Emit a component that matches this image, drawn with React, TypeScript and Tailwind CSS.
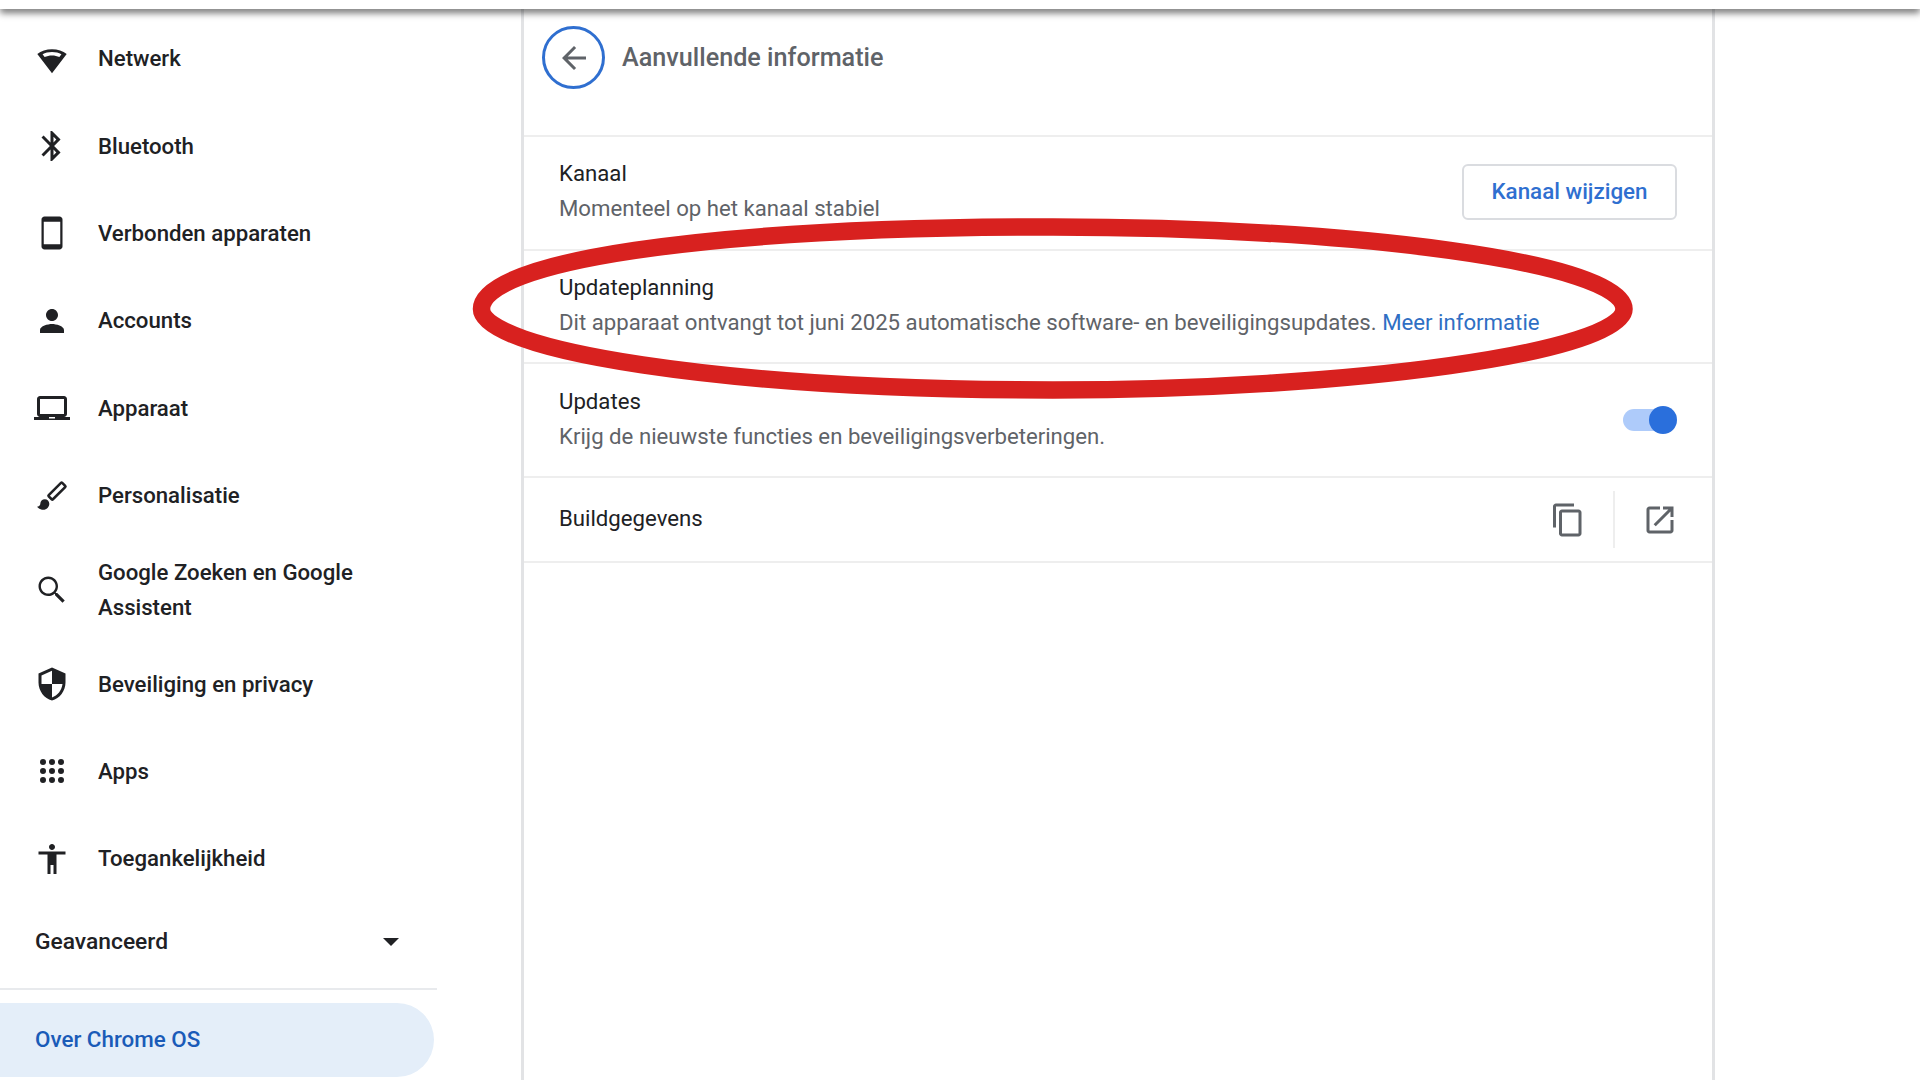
const icons: Record<string, string> = {
  bluetooth:
    "M17.71 7.71L12 2h-1v7.59L6.41 5 5 6.41 10.59 12 5 17.59 6.41 19 11 14.41V22h1l5.71-5.71-4.3-4.29 4.3-4.29zM13 5.83l1.88 1.88L13 9.59V5.83zm1.88 10.46L13 18.17v-3.76l1.88 1.88z",
  phone:
    "M17 1H7c-1.1 0-2 .9-2 2v18c0 1.1.9 2 2 2h10c1.1 0 2-.9 2-2V3c0-1.1-.9-2-2-2zM17.5 19.5h-11v-15h11v15z",
  person:
    "M12 12c2.21 0 4-1.79 4-4s-1.79-4-4-4-4 1.79-4 4 1.79 4 4 4zm0 2c-2.67 0-8 1.34-8 4v2h16v-2c0-2.66-5.33-4-8-4z",
  laptop:
    "M20 18c1.1 0 1.99-.9 1.99-2L22 6c0-1.1-.9-2-2-2H4c-1.1 0-2 .9-2 2v10c0 1.1.9 2 2 2H0v2h24v-2h-4zM4 6h16v10H4V6zM10 18h4v1h-4z",
  brush:
    "M21.4 4.6l-2-2a1.4 1.4 0 0 0-2 0L9.2 10.8a1.4 1.4 0 0 0 0 2l2 2a1.4 1.4 0 0 0 2 0l8.2-8.2a1.4 1.4 0 0 0 0-2zM12.2 13.4l-1.6-1.6 7.8-7.8 1.6 1.6zM7.2 14.2c-1.7 0-3 1.3-3 3 0 1.2-1 1.9-2.2 2 1 1.3 2.7 2 4.2 2 2.2 0 4-1.8 4-4 0-1.7-1.3-3-3-3z",
  search:
    "M15.5 14h-.79l-.28-.27C15.41 12.59 16 11.11 16 9.5 16 5.91 13.09 3 9.5 3S3 5.91 3 9.5 5.91 16 9.5 16c1.61 0 3.09-.59 4.23-1.57l.27.28v.79l5 4.99L20.49 19l-4.99-5zm-6 .4C6.8 14.4 4.6 12.2 4.6 9.5S6.8 4.6 9.5 4.6s4.9 2.2 4.9 4.9-2.2 4.9-4.9 4.9z",
  shield:
    "M12 1L3 5v6c0 5.55 3.84 10.74 9 12 5.16-1.26 9-6.45 9-12V5l-9-4zm0 10.99h7c-.53 4.12-3.28 7.79-7 8.94V12H5V6.3l7-3.11v8.8z",
  accessibility:
    "M12 2c1.1 0 2 .9 2 2s-.9 2-2 2-2-.9-2-2 .9-2 2-2zm9 7h-6v13h-2v-6h-2v6H9V9H3V7h18v2z",
  wifi: "M12 5.5C8.2 5.5 4.7 6.7 2.2 8.7L12 21.5 21.8 8.7C19.3 6.7 15.8 5.5 12 5.5zM12 7.4c-2.4 0-4.5.5-6.3 1.5l1.4 1.7c1.4-.6 3.1-1 4.9-1s3.5.4 4.9 1l1.4-1.7c-1.8-1-3.9-1.5-6.3-1.5z",
  apps: "M6 4a2 2 0 1 0 0 4 2 2 0 0 0 0-4zM12 4a2 2 0 1 0 0 4 2 2 0 0 0 0-4zM18 4a2 2 0 1 0 0 4 2 2 0 0 0 0-4zM6 10a2 2 0 1 0 0 4 2 2 0 0 0 0-4zM12 10a2 2 0 1 0 0 4 2 2 0 0 0 0-4zM18 10a2 2 0 1 0 0 4 2 2 0 0 0 0-4zM6 16a2 2 0 1 0 0 4 2 2 0 0 0 0-4zM12 16a2 2 0 1 0 0 4 2 2 0 0 0 0-4zM18 16a2 2 0 1 0 0 4 2 2 0 0 0 0-4z",
  back: "M20 11H7.83l5.59-5.59L12 4l-8 8 8 8 1.41-1.41L7.83 13H20v-2z",
  copy: "M16 1H4c-1.1 0-2 .9-2 2v14h2V3h12V1zm3 4H8c-1.1 0-2 .9-2 2v14c0 1.1.9 2 2 2h11c1.1 0 2-.9 2-2V7c0-1.1-.9-2-2-2zm0 16H8V7h11v14z",
  external:
    "M19 19H5V5h7V3H5c-1.11 0-2 .9-2 2v14c0 1.1.89 2 2 2h14c1.1 0 2-.9 2-2v-7h-2v7zM14 3v2h3.59l-9.83 9.83 1.41 1.41L19 6.41V10h2V3h-7z",
};

function Icon({ name, className }: { name: string; className?: string }) {
  return (
    <svg viewBox="0 0 24 24" className={className} fill="currentColor" fillRule="evenodd">
      <path d={icons[name]} />
    </svg>
  );
}

function NavItem({ icon, label, tall }: { icon: string; label: string; tall?: boolean }) {
  return (
    <div className={`flex items-center pl-[34px] ${tall ? "h-[101px]" : "h-[87.4px]"}`}>
      <Icon name={icon} className="w-9 h-9 text-[#202124] shrink-0" />
      <span className="ml-7 w-[292px] text-[22.2px] leading-[35px] font-medium text-[#202124]">{label}</span>
    </div>
  );
}

function Row({ title, sub, children }: { title: string; sub: React.ReactNode; children?: React.ReactNode }) {
  return (
    <div className="h-[113.7px] border-t-2 border-[#eeeeee] pl-[35px] pr-[35px] flex items-center justify-between">
      <div className="mb-[3px] text-[22.2px] leading-[35px]">
        <div className="text-[#202124]">{title}</div>
        <div className="text-[#5f6368]">{sub}</div>
      </div>
      {children}
    </div>
  );
}

export default function App() {
  return (
    <div className="relative w-[1920px] h-[1080px] overflow-hidden bg-white font-['Roboto',sans-serif]">
      <div className="relative z-10 h-[9px] bg-white shadow-[0_4px_7px_rgba(0,0,0,0.55)]" />
      <div className="flex h-[1071px]">
        <aside className="w-[521px] shrink-0 pt-[6px]">
          <NavItem icon="wifi" label="Netwerk" />
          <NavItem icon="bluetooth" label="Bluetooth" />
          <NavItem icon="phone" label="Verbonden apparaten" />
          <NavItem icon="person" label="Accounts" />
          <NavItem icon="laptop" label="Apparaat" />
          <NavItem icon="brush" label="Personalisatie" />
          <NavItem icon="search" label="Google Zoeken en Google Assistent" tall />
          <NavItem icon="shield" label="Beveiliging en privacy" />
          <NavItem icon="apps" label="Apps" />
          <NavItem icon="accessibility" label="Toegankelijkheid" />
          <div className="h-[76px] w-[437px] pt-[3px] pl-[35px] pr-[38px] flex items-center justify-between text-[22.8px] font-medium text-[#202124]">
            <span>Geavanceerd</span>
            <span className="w-0 h-0 border-x-[8px] border-t-[8px] border-x-transparent border-t-[#202124]" />
          </div>
          <div className="w-[437px] border-t-2 border-[#e8eaed] mt-[9px]" />
          <div className="mt-[13px] h-[74px] w-[434px] rounded-r-[37px] bg-[#e4eef9] pl-[35px] flex items-center text-[22.4px] font-medium text-[#1a5bb8]">
            Over Chrome OS
          </div>
        </aside>

        <main className="w-[1194px] shrink-0 border-x-[3px] border-[#e2e3e5]">
          <div className="h-[126px] pl-[18px] pt-[17px] flex items-start">
            <div className="w-[63px] h-[63px] rounded-full border-[3px] border-[#2f6fd0] flex items-center justify-center">
              <Icon name="back" className="w-9 h-9 text-[#5f6368]" />
            </div>
            <h1 className="ml-[17px] mt-[14px] text-[25.2px] leading-[36px] font-medium text-[#5f6368]">
              Aanvullende informatie
            </h1>
          </div>
          <Row title="Kanaal" sub="Momenteel op het kanaal stabiel">
            <button className="mb-[2px] w-[215px] h-[56px] rounded-[6px] border-2 border-[#dadce0] text-[22.4px] font-medium text-[#2f6fd0]">
              Kanaal wijzigen
            </button>
          </Row>
          <Row
            title="Updateplanning"
            sub={
              <>
                Dit apparaat ontvangt tot juni 2025 automatische software- en beveiligingsupdates.{" "}
                <span className="text-[#2f6fc4]">Meer informatie</span>
              </>
            }
          />
          <Row title="Updates" sub="Krijg de nieuwste functies en beveiligingsverbeteringen.">
            <div className="relative w-[54px] h-[28px] flex items-center">
              <div className="w-[42px] h-[22px] rounded-full bg-[#aecbfa]" />
              <div className="absolute right-0 top-0 w-[28px] h-[28px] rounded-full bg-[#2a6fdc]" />
            </div>
          </Row>
          <div className="h-[87px] border-y-2 border-[#eeeeee] pl-[35px] pr-[34px] flex items-center justify-between">
            <span className="mb-[2px] text-[22.2px] text-[#202124]">Buildgegevens</span>
            <div className="flex items-center">
              <Icon name="copy" className="w-9 h-9 text-[#5f6368]" />
              <div className="mx-[27px] w-[2px] h-[57px] bg-[#eeeeee]" />
              <Icon name="external" className="w-9 h-9 text-[#5f6368]" />
            </div>
          </div>
        </main>
      </div>

      <svg className="absolute left-0 top-0 z-20 pointer-events-none" width="1920" height="1080" viewBox="0 0 1920 1080">
        <path
          fill="none"
          stroke="#d8211f"
          strokeWidth="17.5"
          d="M481.5 309C481.5 262 700 227 1053 227C1350 227 1624 262 1624 309C1624 352 1350 390 1053 390C720 390 481.5 350 481.5 309Z"
        />
      </svg>
    </div>
  );
}
